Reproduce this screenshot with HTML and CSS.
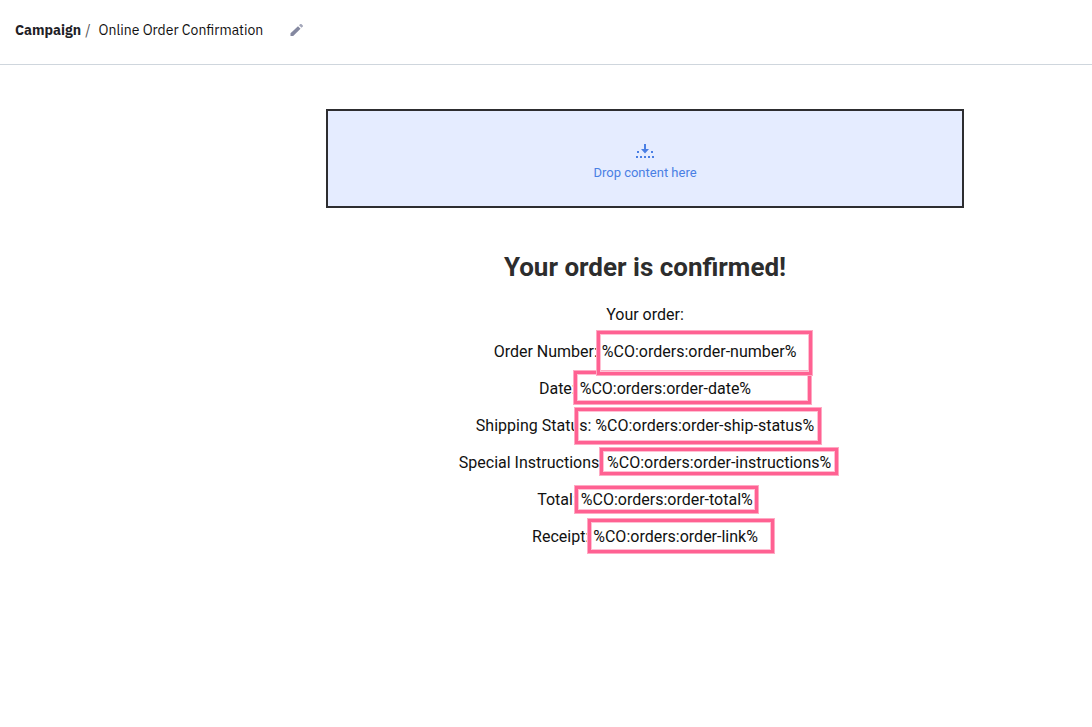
FILE: index.html
```html
<!DOCTYPE html>
<html lang="en">

<head>
  <title>Online Order Confirmation</title>
  <meta charset="UTF-8">
  <meta name="viewport" content="width=device-width, initial-scale=1.0">
  <link rel="stylesheet" href="styles.css">
</head>

<body>
  <header class="header">
    <a href="#" class="crumb">Campaign</a>
    <span class="slash">/</span>
    <span class="name">Online Order Confirmation</span>
    <button type="button" class="edit" aria-label="Edit name">
      <svg viewBox="0 0 14 14" width="14" height="14">
        <path fill="#8488a0" d="M.5 10.300 8 3.200l2.500 2.500L3.200 13H.5z" />
        <path fill="#a4a7ba" d="m9 2.300 1.300-1.200q.6-.4 1.100 0l1.400 1.400q.5.6 0 1.100l-1.300 1.200z" />
      </svg>
    </button>
  </header>

  <main class="canvas">
    <div class="email">
      <div class="drop">
        <svg class="drop-icon" viewBox="0 0 20 16" width="20" height="16">
          <path fill="#4a7fe4" d="M9 1h2v5h3l-4 4.500L6 6h3z" />
          <g fill="#4a7fe4">
            <path d="M2 8h2v2H2zM16 8h2v2h-2z" />
            <path d="M1 13h2v2H1zM5 13h2v2H5zM9 13h2v2H9zM13 13h2v2h-2zM17 13h2v2h-2z" />
          </g>
        </svg>
        <span>Drop content here</span>
      </div>

      <h1>Your order is confirmed!</h1>

      <p>Your order:</p>
      <p>Order Number: <span class="value number">%CO:orders:order-number%</span></p>
      <p>Date: <span class="value date">%CO:orders:order-date%</span></p>
      <p>Shipping Status: <span class="value status">%CO:orders:order-ship-status%</span></p>
      <p>Special Instructions: <span class="value instructions">%CO:orders:order-instructions%</span></p>
      <p>Total: <span class="value total">%CO:orders:order-total%</span></p>
      <p>Receipt: <span class="value link">%CO:orders:order-link%</span></p>
    </div>
  </main>
</body>

</html>
```
FILE: styles.css
```css
body {
  background-color: #fff;
  color: #111;
  font-family: Roboto, Arial, sans-serif;
  font-size: 16px;
  margin: 0;
}

.header {
  display: flex;
  align-items: center;
  min-height: 60px;
  padding: 0 15px 4px;
  border-bottom: 1px solid #cfd6dd;
  font-family: "IBM Plex Sans", Roboto, sans-serif;
  font-size: 14px;
}

.crumb {
  color: #1f2126;
  font-weight: bold;
  text-decoration: none;
}

.slash {
  margin: 0 8px 0 4px;
  color: #555;
}

.edit {
  display: flex;
  margin-left: 27px;
  padding: 0;
  border: none;
  background: none;
  cursor: pointer;
}

.canvas {
  display: flex;
  justify-content: center;
  padding: 44px 0 40px 198px;
}

.email {
  flex: 0 1 638px;
  text-align: center;
}

.drop {
  display: flex;
  flex-direction: column;
  align-items: center;
  justify-content: center;
  gap: 4px;
  min-height: 87px;
  padding-top: 8px;
  border: 2px solid #2d2d30;
  background-color: #e5ecff;
  color: #4a7fe4;
  font-size: 13px;
  line-height: 20px;
}

h1 {
  margin: 41px 0 11px;
  color: #2d2d2d;
  font-size: 26px;
  line-height: 36px;
}

p {
  margin: 0;
  line-height: 37px;
}

/* pink frames drawn over the merge tags */
.value {
  display: inline-block;
  position: relative;
}

.value::after {
  content: "";
  position: absolute;
  border: 3px solid #ff6192;
  outline: 1px solid #ffa9c3;
  box-shadow: inset 0 0 0 1px #ffc0d3;
}

.number::after {
  inset: -2px -16px -5px -5px;
  z-index: 1;
}

.date::after {
  inset: 1px -60px 3px -6px;
}

.status::after {
  inset: 1px -7px 0 -20px;
}

.instructions::after {
  inset: 4px -7px 6px -7px;
}

.total::after {
  inset: 5px -5px 5px -6px;
}

.link::after {
  inset: 1px -16px 2px -5px;
}
```
